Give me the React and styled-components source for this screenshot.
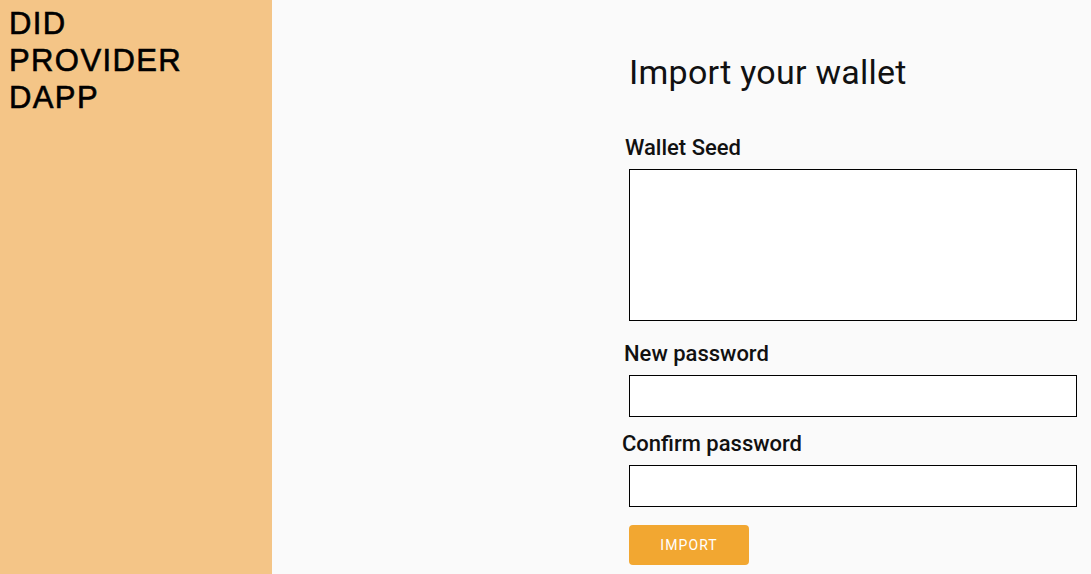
import React from "react"
import styled, { createGlobalStyle } from "styled-components"

const GlobalStyle = createGlobalStyle`
  html, body {
    margin: 0;
    padding: 0;
    height: 100%;
  }
  body {
    font-family: Roboto, "Liberation Sans", sans-serif;
    background: #fafafa;
  }
`

const App = () => {
  return (
    <Page>
      <GlobalStyle />
      <Sidebar>
        <Brand>
          DID
          <br />
          PROVIDER
          <br />
          DAPP
        </Brand>
      </Sidebar>
      <Main>
        <Form>
          <Title>Import your wallet</Title>
          <Label $shift={-4} $top={43}>
            Wallet Seed
          </Label>
          <SeedArea />
          <Label $shift={-5} $top={20}>
            New password
          </Label>
          <Input type="password" />
          <Label $shift={-7} $top={14}>
            Confirm password
          </Label>
          <Input type="password" />
          <Button>Import</Button>
        </Form>
      </Main>
    </Page>
  )
}

export default App

const Page = styled.div`
  display: flex;
  width: 100%;
  height: 574px;
  overflow: hidden;
`

const Sidebar = styled.aside`
  flex: 0 0 272px;
  background-color: #f4c587;
  padding: 5px 9px;
  box-sizing: border-box;
`

const Brand = styled.h1`
  margin: 0;
  font-family: "Liberation Sans", Arial, sans-serif;
  font-size: 31px;
  font-weight: 400;
  line-height: 37px;
  letter-spacing: 1.4px;
  color: #000;
  -webkit-text-stroke: 0.6px #000;
`

const Main = styled.main`
  flex: 1;
  display: flex;
  justify-content: flex-end;
  padding-right: 14px;
  background: #fafafa;
`

const Form = styled.div`
  display: flex;
  flex-direction: column;
  width: 448px;
  padding-top: 52px;
`

const Title = styled.h2`
  margin: 0;
  font-size: 34px;
  font-weight: 400;
  line-height: 40px;
  letter-spacing: 0.25px;
  color: #111;
`

const Label = styled.label`
  margin: ${(p) => p.$top}px 0 8px ${(p) => p.$shift}px;
  font-size: 22px;
  font-weight: 500;
  line-height: 26px;
  color: #111;
`

const SeedArea = styled.textarea`
  display: block;
  box-sizing: border-box;
  width: 448px;
  height: 152px;
  margin: 0;
  border: 1.5px solid #000;
  border-radius: 0;
  background: #fff;
  resize: none;
  outline: none;
`

const Input = styled.input`
  display: block;
  box-sizing: border-box;
  width: 448px;
  height: 42px;
  margin: 0;
  border: 1.5px solid #000;
  border-radius: 0;
  background: #fff;
  outline: none;
`

const Button = styled.button`
  align-self: flex-start;
  margin-top: 18px;
  width: 120px;
  height: 40px;
  border: none;
  border-radius: 4px;
  background-color: #f2a731;
  color: #fff;
  font-family: Roboto, sans-serif;
  font-size: 14px;
  font-weight: 400;
  letter-spacing: 1.1px;
  text-transform: uppercase;
  cursor: pointer;
`
